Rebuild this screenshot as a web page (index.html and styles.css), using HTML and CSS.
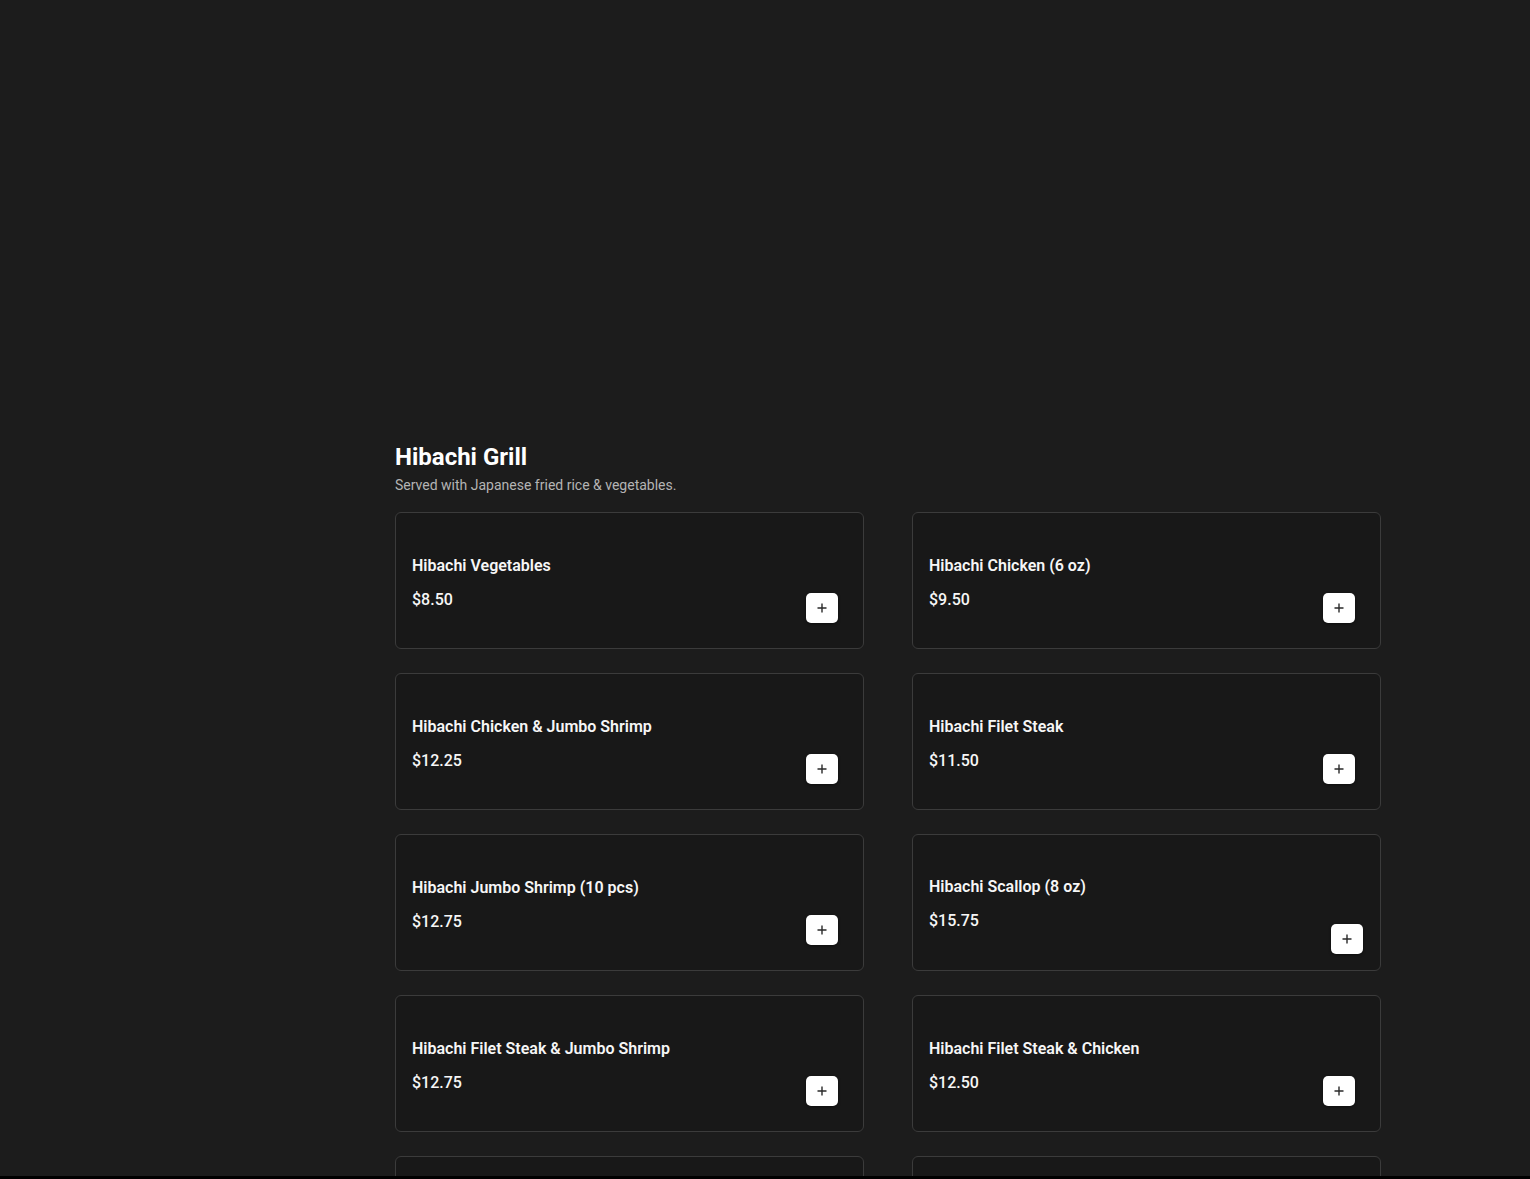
FILE: index.html
```html
<!DOCTYPE html>
<html lang="en">
<head>
<meta charset="utf-8">
<title>Hibachi Grill</title>
<link rel="stylesheet" href="styles.css">
</head>
<body>
<div class="page">
  <div class="hero"></div>
  <section class="category">
    <h2 class="cat-title">Hibachi Grill</h2>
    <p class="cat-desc">Served with Japanese fried rice &amp; vegetables.</p>
    <div class="grid">
      <div class="card"><div class="info"><div class="name">Hibachi Vegetables</div><div class="price">$8.50</div></div><button class="add" aria-label="Add"><svg viewBox="0 0 10 10" width="10" height="10"><path d="M5 0.5V9.5M0.5 5H9.5"/></svg></button></div>
      <div class="card"><div class="info"><div class="name">Hibachi Chicken (6 oz)</div><div class="price">$9.50</div></div><button class="add" aria-label="Add"><svg viewBox="0 0 10 10" width="10" height="10"><path d="M5 0.5V9.5M0.5 5H9.5"/></svg></button></div>
      <div class="card"><div class="info"><div class="name">Hibachi Chicken &amp; Jumbo Shrimp</div><div class="price">$12.25</div></div><button class="add" aria-label="Add"><svg viewBox="0 0 10 10" width="10" height="10"><path d="M5 0.5V9.5M0.5 5H9.5"/></svg></button></div>
      <div class="card"><div class="info"><div class="name">Hibachi Filet Steak</div><div class="price">$11.50</div></div><button class="add" aria-label="Add"><svg viewBox="0 0 10 10" width="10" height="10"><path d="M5 0.5V9.5M0.5 5H9.5"/></svg></button></div>
      <div class="card"><div class="info"><div class="name">Hibachi Jumbo Shrimp (10 pcs)</div><div class="price">$12.75</div></div><button class="add" aria-label="Add"><svg viewBox="0 0 10 10" width="10" height="10"><path d="M5 0.5V9.5M0.5 5H9.5"/></svg></button></div>
      <div class="card card-alt"><div class="info"><div class="name">Hibachi Scallop (8 oz)</div><div class="price">$15.75</div></div><button class="add" aria-label="Add"><svg viewBox="0 0 10 10" width="10" height="10"><path d="M5 0.5V9.5M0.5 5H9.5"/></svg></button></div>
      <div class="card"><div class="info"><div class="name">Hibachi Filet Steak &amp; Jumbo Shrimp</div><div class="price">$12.75</div></div><button class="add" aria-label="Add"><svg viewBox="0 0 10 10" width="10" height="10"><path d="M5 0.5V9.5M0.5 5H9.5"/></svg></button></div>
      <div class="card"><div class="info"><div class="name">Hibachi Filet Steak &amp; Chicken</div><div class="price">$12.50</div></div><button class="add" aria-label="Add"><svg viewBox="0 0 10 10" width="10" height="10"><path d="M5 0.5V9.5M0.5 5H9.5"/></svg></button></div>
      <div class="card"><div class="info"><div class="name">&nbsp;</div><div class="price">&nbsp;</div></div></div>
      <div class="card"><div class="info"><div class="name">&nbsp;</div><div class="price">&nbsp;</div></div></div>
    </div>
  </section>
</div>
<div class="bottom-bar"></div>
</body>
</html>
```

FILE: styles.css
```css
html, body {
  margin: 0;
  padding: 0;
  background: #1c1c1c;
  color: #f4f4f4;
  font-family: Roboto, "Liberation Sans", Arial, sans-serif;
  overflow: hidden;
  height: 100%;
}
.page {
  padding-left: 395px;
  width: 986px;
}
.hero {
  height: 441px;
}
.cat-title {
  margin: 0;
  font-size: 24px;
  line-height: 32px;
  font-weight: 700;
  color: #ffffff;
}
.cat-desc {
  margin: 2px 0 0;
  font-size: 14px;
  line-height: 20px;
  color: #b4b4b4;
}
.grid {
  margin-top: 17px;
  display: grid;
  grid-template-columns: 469px 469px;
  column-gap: 48px;
  row-gap: 24px;
}
.card {
  box-sizing: border-box;
  height: 137px;
  border: 1px solid #3b3b3b;
  border-radius: 6px;
  background: #181818;
  padding: 40px 25px 25px 16px;
  display: flex;
  justify-content: space-between;
  align-items: flex-end;
}
.info {
  padding-bottom: 11px;
}
.name {
  font-size: 16px;
  line-height: 24px;
  font-weight: 600;
  color: #f6f6f6;
}
.price {
  margin-top: 10px;
  font-size: 16px;
  line-height: 24px;
  font-weight: 500;
  color: #f6f6f6;
}
.add {
  width: 32px;
  height: 30px;
  border: none;
  border-radius: 5px;
  background: #ffffff;
  padding: 0;
  display: flex;
  align-items: center;
  justify-content: center;
  cursor: pointer;
  box-shadow: 0 1px 3px rgba(0,0,0,0.5);
}
.add svg {
  display: block;
}
.add path {
  stroke: #2a2a2a;
  stroke-width: 1.4;
  fill: none;
}
.card-alt {
  padding-right: 17px;
  padding-bottom: 16px;
}
.card-alt .info {
  padding-bottom: 21px;
}
.bottom-bar {
  position: fixed;
  left: 0;
  right: 0;
  bottom: 0;
  height: 3px;
  background: #000000;
}
```
